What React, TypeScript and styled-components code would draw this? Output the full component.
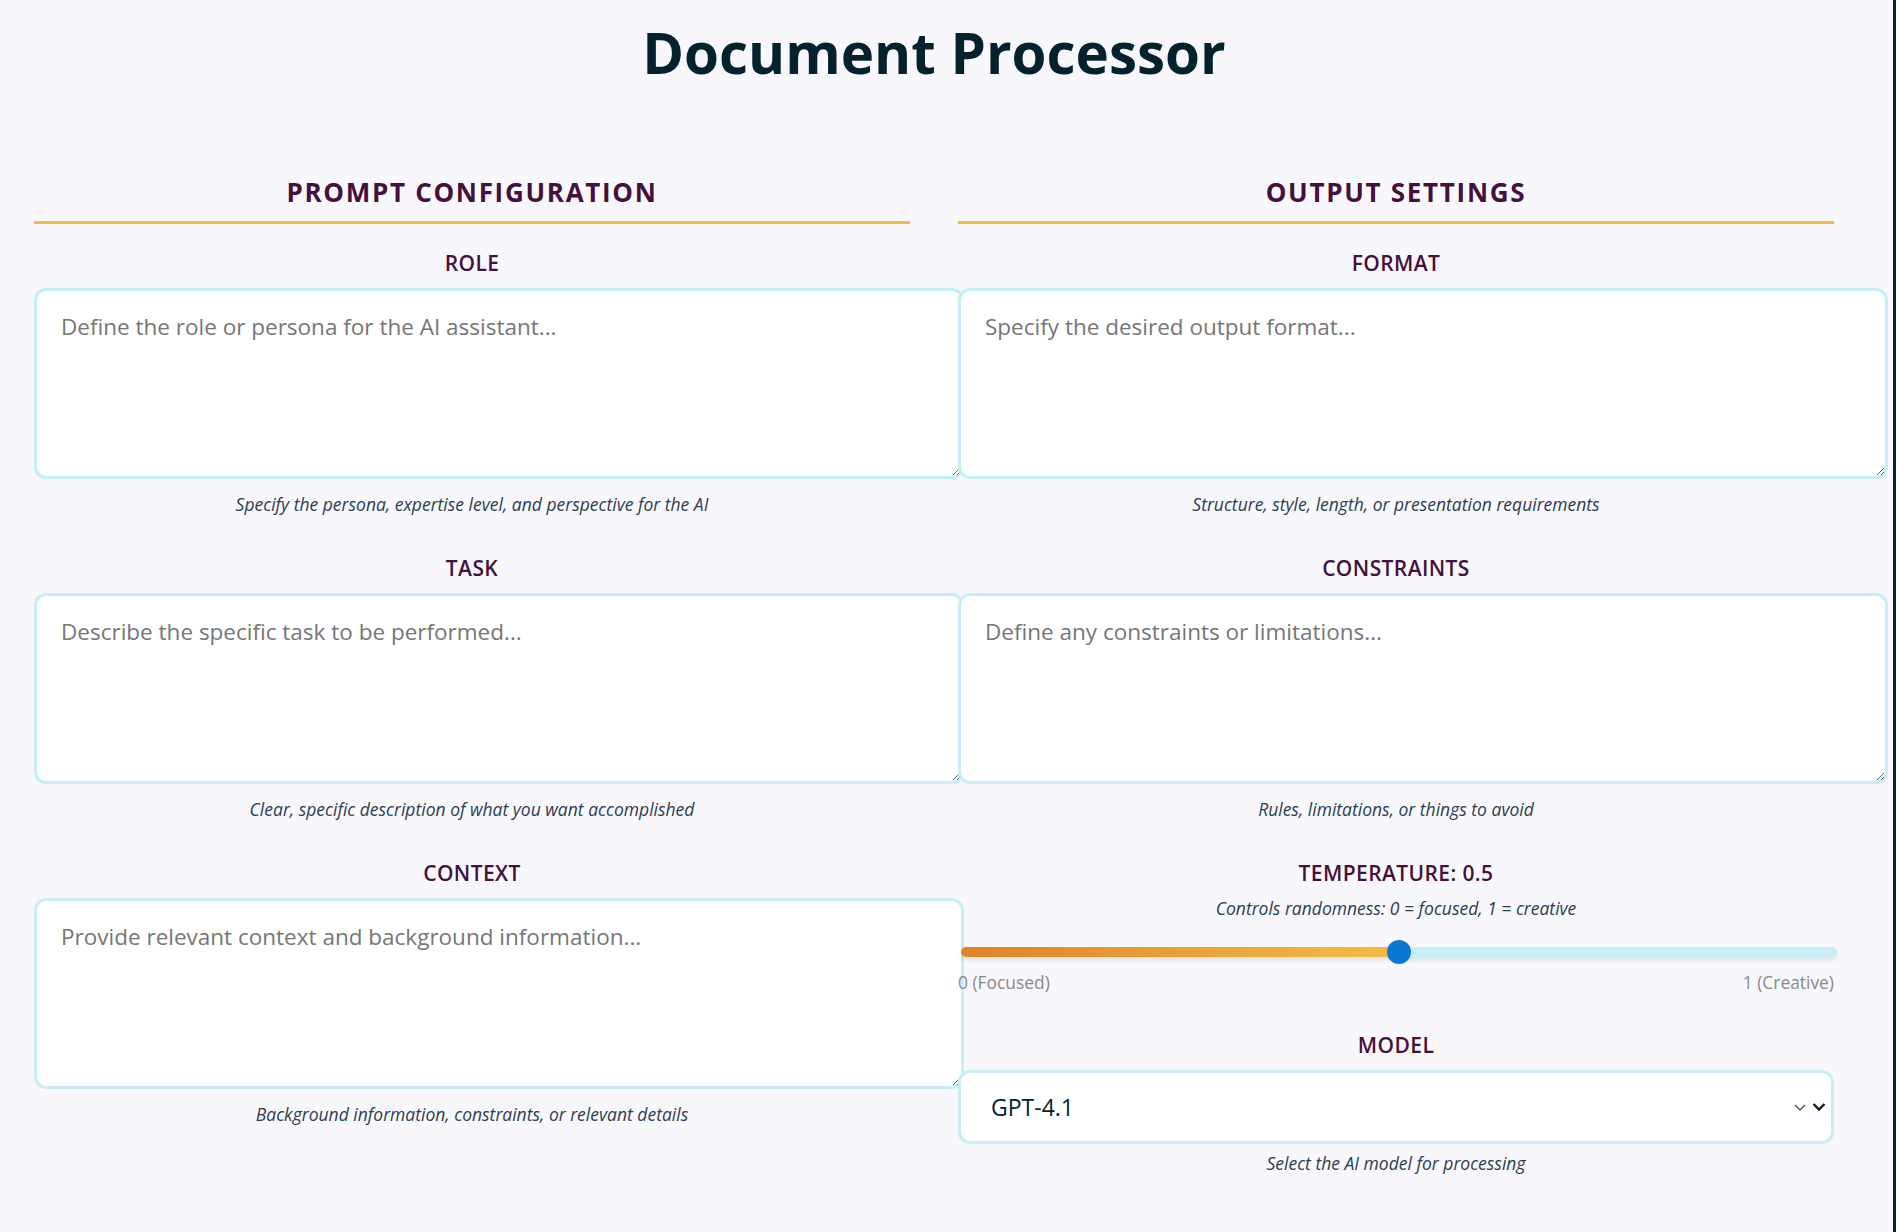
import React, { useState } from "react";
import styled, { createGlobalStyle } from "styled-components";

const GlobalStyle = createGlobalStyle`
  html {
    background: #f8f8fc;
    border-right: 3px solid #06222d;
    min-height: 100%;
  }
  body {
    margin: 0;
    background: #f8f8fc;
    font-family: "Open Sans", "Noto Sans", sans-serif;
  }
  * { box-sizing: content-box; }
`;

const Page = styled.div`
  width: 1800px;
  padding: 17px 0 60px 34px;
`;

const Title = styled.h1`
  margin: 0;
  text-align: center;
  font-size: 56.5px;
  line-height: 72px;
  font-weight: 700;
  color: #04222e;
`;

const Columns = styled.div`
  display: grid;
  grid-template-columns: 876px 876px;
  column-gap: 48px;
  margin-top: 85px;
`;

const Column = styled.section`
  display: flex;
  flex-direction: column;
  min-width: 0;
`;

const SectionTitle = styled.h2`
  margin: 0 0 25px;
  padding-bottom: 11px;
  border-bottom: 3px solid #f2bd45;
  text-align: center;
  font-size: 26px;
  line-height: 36px;
  font-weight: 700;
  letter-spacing: 1.7px;
  color: #45103c;
`;

const Field = styled.div`
  display: flex;
  flex-direction: column;
  margin-bottom: 38px;
`;

const Label = styled.label`
  display: block;
  text-align: center;
  font-size: 21px;
  line-height: 28px;
  font-weight: 600;
  letter-spacing: 0.4px;
  color: #45103c;
  margin-bottom: 11px;
`;

const TextArea = styled.textarea`
  display: block;
  width: 100%;
  height: 142px;
  padding: 19px 24px 24px;
  border: 3px solid #c6eef6;
  border-radius: 12px;
  background: #ffffff;
  font-family: "Open Sans", "Noto Sans", sans-serif;
  font-size: 22.5px;
  line-height: 33px;
  color: #04222e;
  outline: none;
  margin: 0;
  &::placeholder {
    color: #767676;
  }
`;

const Hint = styled.p<{ $gap?: number }>`
  margin: ${(p) => p.$gap ?? 13}px 0 0;
  text-align: center;
  font-size: 17.5px;
  line-height: 24px;
  font-style: italic;
  color: #2c3e50;
`;

const SliderBlock = styled.div`
  display: flex;
  flex-direction: column;
  margin-bottom: 37px;
`;

const SliderLabel = styled(Label)`
  margin-bottom: 9px;
`;

const SubHint = styled.p`
  margin: 0 0 20px;
  text-align: center;
  font-size: 17.5px;
  line-height: 24px;
  font-style: italic;
  color: #2c3e50;
`;

const Range = styled.input`
  -webkit-appearance: none;
  appearance: none;
  display: block;
  width: 100%;
  height: 24px;
  margin: 0 0 0 3px;
  padding: 0;
  background: transparent;
  outline: none;
  &::-webkit-slider-runnable-track {
    height: 10px;
    border-radius: 5px;
    background: var(--track);
    box-shadow: 0 3px 4px rgba(40, 60, 80, 0.12);
  }
  &::-webkit-slider-thumb {
    -webkit-appearance: none;
    appearance: none;
    width: 24px;
    height: 24px;
    margin-top: -7px;
    border: none;
    border-radius: 50%;
    background: #0a77d2;
  }
  &::-moz-range-track {
    height: 10px;
    border-radius: 5px;
    background: var(--track);
  }
  &::-moz-range-thumb {
    width: 24px;
    height: 24px;
    border: none;
    border-radius: 50%;
    background: #0a77d2;
  }
`;

const RangeEnds = styled.div`
  display: flex;
  justify-content: space-between;
  margin-top: 6px;
  font-size: 17.4px;
  line-height: 24px;
  color: #8a8a8a;
`;

const SelectWrap = styled.div`
  position: relative;
`;

const Select = styled.select`
  -webkit-appearance: none;
  appearance: none;
  display: block;
  box-sizing: border-box;
  width: 100%;
  height: 74px;
  margin: 0;
  padding: 0 60px 0 30px;
  border: 3px solid #c6eef6;
  border-radius: 12px;
  background: #ffffff;
  font-family: "Open Sans", "Noto Sans", sans-serif;
  font-size: 23px;
  color: #04222e;
  outline: none;
`;

const Chevrons = styled.div`
  position: absolute;
  right: 8px;
  top: 50%;
  transform: translateY(-50%);
  display: flex;
  align-items: center;
  gap: 6px;
  pointer-events: none;
`;

const promptFields = [
  {
    label: "ROLE",
    placeholder: "Define the role or persona for the AI assistant...",
    hint: "Specify the persona, expertise level, and perspective for the AI",
  },
  {
    label: "TASK",
    placeholder: "Describe the specific task to be performed...",
    hint: "Clear, specific description of what you want accomplished",
  },
  {
    label: "CONTEXT",
    placeholder: "Provide relevant context and background information...",
    hint: "Background information, constraints, or relevant details",
  },
];

const outputFields = [
  {
    label: "FORMAT",
    placeholder: "Specify the desired output format...",
    hint: "Structure, style, length, or presentation requirements",
  },
  {
    label: "CONSTRAINTS",
    placeholder: "Define any constraints or limitations...",
    hint: "Rules, limitations, or things to avoid",
  },
];

export default function App() {
  const [temp, setTemp] = useState(0.5);
  const [model, setModel] = useState("gpt-4.1");
  const pct = temp * 100;
  const track = `linear-gradient(to right, #df8329 0%, #f2bd45 ${pct}%, #c5eef5 ${pct}%, #c5eef5 100%)`;

  return (
    <>
      <GlobalStyle />
      <Page>
        <Title>Document Processor</Title>
        <Columns>
          <Column>
            <SectionTitle>PROMPT CONFIGURATION</SectionTitle>
            {promptFields.map((f) => (
              <Field key={f.label}>
                <Label>{f.label}</Label>
                <TextArea placeholder={f.placeholder} />
                <Hint>{f.hint}</Hint>
              </Field>
            ))}
          </Column>
          <Column>
            <SectionTitle>OUTPUT SETTINGS</SectionTitle>
            {outputFields.map((f) => (
              <Field key={f.label}>
                <Label>{f.label}</Label>
                <TextArea placeholder={f.placeholder} />
                <Hint>{f.hint}</Hint>
              </Field>
            ))}
            <SliderBlock>
              <SliderLabel>TEMPERATURE: {temp.toFixed(1)}</SliderLabel>
              <SubHint>Controls randomness: 0 = focused, 1 = creative</SubHint>
              <Range
                type="range"
                min={0}
                max={1}
                step={0.1}
                value={temp}
                onChange={(e) => setTemp(parseFloat(e.target.value))}
                style={{ ["--track" as string]: track } as React.CSSProperties}
              />
              <RangeEnds>
                <span>0 (Focused)</span>
                <span>1 (Creative)</span>
              </RangeEnds>
            </SliderBlock>
            <Field>
              <Label>MODEL</Label>
              <SelectWrap>
                <Select value={model} onChange={(e) => setModel(e.target.value)}>
                  <option value="gpt-4.1">GPT-4.1</option>
                  <option value="gpt-4o">GPT-4o</option>
                  <option value="gpt-4.1-mini">GPT-4.1 mini</option>
                </Select>
                <Chevrons>
                  <svg width="12" height="8" viewBox="0 0 12 8" fill="none">
                    <path d="M1 1.5 L6 6.5 L11 1.5" stroke="#3d4f60" strokeWidth="1.3" />
                  </svg>
                  <svg width="14" height="9" viewBox="0 0 14 9" fill="none">
                    <path d="M1.5 1.5 L7 7 L12.5 1.5" stroke="#0c1c26" strokeWidth="2.4" />
                  </svg>
                </Chevrons>
              </SelectWrap>
              <Hint $gap={7}>Select the AI model for processing</Hint>
            </Field>
          </Column>
        </Columns>
      </Page>
    </>
  );
}
